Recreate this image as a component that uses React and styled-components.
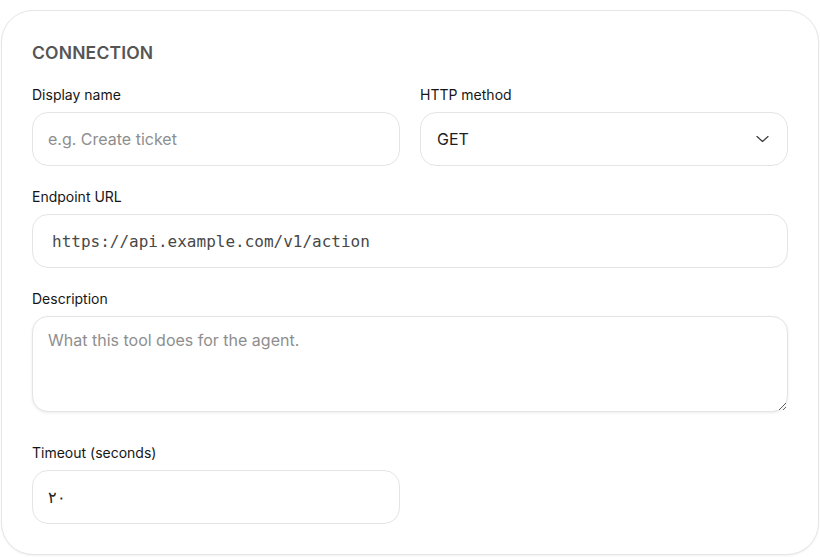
import React from 'react';
import styled, { createGlobalStyle } from 'styled-components';

const GlobalStyle = createGlobalStyle`
  html, body {
    margin: 0;
    padding: 0;
    background: #ffffff;
    font-family: Inter, "Liberation Sans", sans-serif;
  }
  * { box-sizing: border-box; }
`;

const Page = styled.div`
  padding: 10px 1px 2px 1px;
`;

const Card = styled.section`
  background: #ffffff;
  border: 1px solid #e6e6e6;
  border-radius: 32px;
  box-shadow: 0 1px 2px rgba(0, 0, 0, 0.06);
  padding: 30px 30px 30px 30px;
`;

const Heading = styled.h2`
  margin: 0 0 20px;
  font-size: 17.5px;
  line-height: 24px;
  font-weight: 600;
  letter-spacing: 0.01em;
  color: #555555;
`;

const Form = styled.div`
  display: flex;
  flex-direction: column;
  gap: 21px;
`;

const Row = styled.div`
  display: grid;
  grid-template-columns: 1fr 1fr;
  gap: 20px;
`;

const Field = styled.label`
  display: flex;
  flex-direction: column;
  gap: 7px;
`;

const Label = styled.span`
  font-size: 14px;
  line-height: 20px;
  font-weight: 400;
  color: #161616;
`;

const Input = styled.input`
  height: 54px;
  width: 100%;
  border: 1px solid #e4e4e4;
  border-radius: 16px;
  background: #ffffff;
  padding: 0 ${p => (p.$mono ? 19 : 15)}px;
  font-family: ${p => (p.$mono ? '"DejaVu Sans Mono", "Liberation Mono", monospace' : 'Inter, "Liberation Sans", sans-serif')};
  font-size: 16px;
  color: ${p => (p.$mono ? '#484848' : '#222222')};
  outline: none;
  &::placeholder { color: #8e8e8e; }
`;

const SelectWrap = styled.div`
  position: relative;
`;

const Select = styled.select`
  appearance: none;
  height: 54px;
  width: 100%;
  border: 1px solid #e4e4e4;
  border-radius: 16px;
  background: #ffffff;
  padding: 0 44px 0 16px;
  font-family: Inter, "Liberation Sans", sans-serif;
  font-size: 16px;
  color: #1e1e1e;
  outline: none;
`;

const Chevron = styled.svg`
  position: absolute;
  right: 19px;
  top: 50%;
  transform: translateY(-50%);
  pointer-events: none;
`;

const TextArea = styled.textarea`
  display: block;
  height: 96px;
  width: 100%;
  margin-bottom: 10px;
  border: 1px solid #e4e4e4;
  border-radius: 16px;
  background: #ffffff;
  box-shadow: 0 1px 3px rgba(0, 0, 0, 0.08);
  padding: 12px 15px;
  font-family: Inter, "Liberation Sans", sans-serif;
  font-size: 16px;
  line-height: 22px;
  color: #2a2a2a;
  outline: none;
  &::placeholder { color: #8e8e8e; }
`;

export default function App() {
  return (
    <Page>
      <GlobalStyle />
      <Card>
        <Heading>CONNECTION</Heading>
        <Form>
          <Row>
            <Field>
              <Label>Display name</Label>
              <Input placeholder="e.g. Create ticket" />
            </Field>
            <Field as="div">
              <Label>HTTP method</Label>
              <SelectWrap>
                <Select defaultValue="GET">
                  <option>GET</option>
                  <option>POST</option>
                  <option>PUT</option>
                  <option>PATCH</option>
                  <option>DELETE</option>
                </Select>
                <Chevron width="13" height="7" viewBox="0 0 13 7" fill="none">
                  <path d="M1 1l5.5 5 5.5-5" stroke="#3c3c3c" strokeWidth="1.2" strokeLinecap="round" strokeLinejoin="round" />
                </Chevron>
              </SelectWrap>
            </Field>
          </Row>
          <Field>
            <Label>Endpoint URL</Label>
            <Input $mono defaultValue="https://api.example.com/v1/action" />
          </Field>
          <Field>
            <Label>Description</Label>
            <TextArea placeholder="What this tool does for the agent." />
          </Field>
          <Row>
            <Field>
              <Label>Timeout (seconds)</Label>
              <Input defaultValue="٢٠" />
            </Field>
          </Row>
        </Form>
      </Card>
    </Page>
  );
}
